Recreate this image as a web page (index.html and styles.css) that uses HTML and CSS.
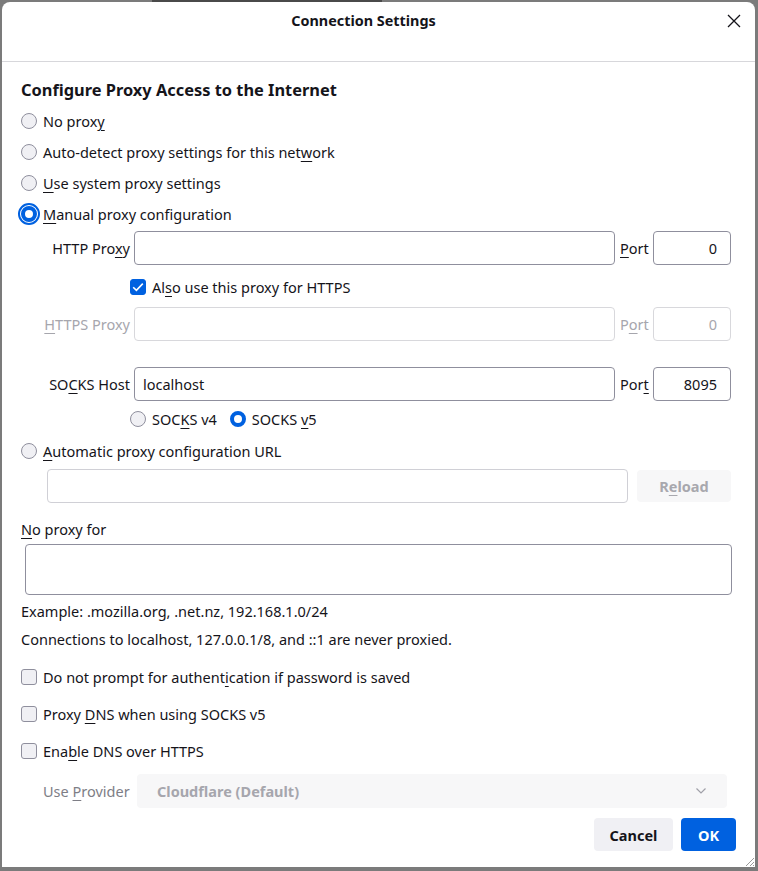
FILE: index.html
```html
<!DOCTYPE html>
<html>
<head>
<meta charset="utf-8">
<link rel="stylesheet" href="styles.css">
</head>
<body>
<div class="backstrip"></div>
<div class="dialog">
  <div class="header">
    <div class="title">Connection Settings</div>
    <svg class="close" width="14" height="14" viewBox="0 0 14 14"><path d="M1 1L13 13M13 1L1 13" stroke="#15141a" stroke-width="1.3" fill="none"/></svg>
  </div>
  <div class="content">
    <div class="heading">Configure Proxy Access to the Internet</div>
    <div class="opt"><span class="radio"></span><span>No prox<u>y</u></span></div>
    <div class="opt"><span class="radio"></span><span>Auto-detect proxy settings for this net<u>w</u>ork</span></div>
    <div class="opt"><span class="radio"></span><span><u>U</u>se system proxy settings</span></div>
    <div class="opt"><span class="radio on focus"></span><span class="tight"><u>M</u>anual proxy configuration</span></div>

    <div class="prow first">
      <span class="plabel">HTTP Pro<u>x</u>y</span>
      <span class="field host"></span>
      <span class="portl"><u>P</u>ort</span>
      <span class="field port">0</span>
    </div>
    <div class="chkrow"><span class="check on"><svg width="12" height="10" viewBox="0 0 12 10"><path d="M1.2 5.2L4.4 8.3L10.8 1.6" stroke="#fff" stroke-width="1.6" fill="none"/></svg></span><span>Al<u>s</u>o use this proxy for HTTPS</span></div>
    <div class="prow dis https">
      <span class="plabel"><u>H</u>TTPS Proxy</span>
      <span class="field host"></span>
      <span class="portl">P<u>o</u>rt</span>
      <span class="field port">0</span>
    </div>
    <div class="prow socks">
      <span class="plabel">SO<u>C</u>KS Host</span>
      <span class="field host">localhost</span>
      <span class="portl">Por<u>t</u></span>
      <span class="field port">8095</span>
    </div>
    <div class="verrow">
      <span class="vopt"><span class="radio"></span><span>SOC<u>K</u>S v4</span></span>
      <span class="vopt"><span class="radio on"></span><span>SOCKS <u>v</u>5</span></span>
    </div>
    <div class="opt auto"><span class="radio"></span><span><u>A</u>utomatic proxy configuration URL</span></div>
    <div class="urlrow">
      <span class="field url"></span>
      <span class="reload">R<u>e</u>load</span>
    </div>
    <div class="text noproxy"><u>N</u>o proxy for</div>
    <div class="area"></div>
    <div class="text example">Example: .mozilla.org, .net.nz, 192.168.1.0/24</div>
    <div class="text never">Connections to localhost, 127.0.0.1/8, and ::1 are never proxied.</div>
    <div class="checks">
      <div class="copt"><span class="check"></span><span>Do not prompt for authent<u>i</u>cation if password is saved</span></div>
      <div class="copt"><span class="check"></span><span>Proxy <u>D</u>NS when using SOCKS v5</span></div>
      <div class="copt"><span class="check"></span><span>Ena<u>b</u>le DNS over HTTPS</span></div>
    </div>
    <div class="provrow">
      <span class="provl">Use <u>P</u>rovider</span>
      <span class="select"><span>Cloudflare (Default)</span><svg width="12" height="8" viewBox="0 0 12 8"><path d="M1.5 1.5L6 6L10.5 1.5" stroke="#a0a0a8" stroke-width="1.2" fill="none"/></svg></span>
    </div>
    <div class="buttons">
      <span class="btn cancel">Cancel</span>
      <span class="btn ok">OK</span>
    </div>
  </div>
  <svg class="grip" width="12" height="12" viewBox="0 0 12 12"><path d="M11 3L3 11M11 7L7 11M11 10L10 11" stroke="#9a9a9a" stroke-width="1" fill="none"/></svg>
</div>
</body>
</html>
```

FILE: styles.css
```css
html, body {
  margin: 0;
  padding: 0;
  height: 100%;
}
body {
  background: #7b7b7b;
  font-family: "Noto Sans", "DejaVu Sans", sans-serif;
  font-size: 14.5px;
  color: #15141a;
  overflow: hidden;
  position: relative;
}
.backstrip {
  position: absolute;
  left: 152px;
  top: 0;
  width: 230px;
  height: 2px;
  background: #4a4a4a;
}
.dialog {
  position: absolute;
  left: 2px;
  top: 2px;
  right: 3px;
  bottom: 4px;
  background: #fff;
  border-radius: 8px 8px 0 0;
  overflow: hidden;
}
u {
  text-decoration-thickness: 1px;
  text-underline-offset: 3px;
}
.header {
  height: 59px;
  border-bottom: 1px solid #d7d7db;
  position: relative;
  display: flex;
  justify-content: center;
  padding-right: 30px;
}
.title {
  font-weight: bold;
  font-size: 14.4px;
  line-height: 20px;
  margin-top: 9px;
}
.close {
  position: absolute;
  right: 14px;
  top: 12px;
}
.content {
  padding: 0 0 0 19px;
  display: flex;
  flex-direction: column;
}
.heading {
  font-weight: bold;
  font-size: 16.4px;
  line-height: 24px;
  margin-top: 16px;
  height: 24px;
  margin-bottom: 3px;
}
.opt {
  height: 31px;
  display: flex;
  align-items: center;
  gap: 6px;
}
.radio {
  width: 16px;
  height: 16px;
  box-sizing: border-box;
  border-radius: 50%;
  border: 1px solid #8f8f9d;
  background: #f0f0f4;
  flex: none;
}
.radio.on {
  border: 4px solid #0061e0;
  background: #fff;
}
.radio.focus {
  outline: 2px solid #0061e0;
  outline-offset: 1px;
}
.prow {
  display: grid;
  grid-template-columns: 87px 481px 30px 78px;
  column-gap: 4px;
  align-items: center;
  margin-left: 22px;
  height: 34px;
}
.prow.first { margin-top: 2px; }
.prow.https { margin-top: 4px; }
.prow.socks { margin-top: 26px; }
.plabel {
  text-align: right;
  white-space: nowrap;
}
.portl {
  margin-left: 1px;
}
.field {
  height: 34px;
  box-sizing: border-box;
  border: 1px solid #8f8f9d;
  border-radius: 4px;
  background: #fff;
  display: flex;
  align-items: center;
  padding: 0 8px;
}
.field.port {
  justify-content: flex-end;
  padding-right: 13px;
}
.dis {
  color: #a6a6ad;
}
.dis .field {
  border-color: #d8d8dc;
}
.chkrow {
  display: flex;
  align-items: center;
  gap: 6px;
  height: 32px;
  margin-top: 6px;
  margin-left: 109px;
}
.check {
  width: 16px;
  height: 16px;
  box-sizing: border-box;
  border: 1px solid #8f8f9d;
  border-radius: 3px;
  background: #f0f0f4;
  flex: none;
  display: flex;
  align-items: center;
  justify-content: center;
}
.check.on {
  background: #0061e0;
  border-color: #0061e0;
}
.verrow {
  display: flex;
  height: 30px;
  margin-top: 3px;
  margin-left: 109px;
  gap: 13px;
}
.vopt {
  display: flex;
  align-items: center;
  gap: 6px;
}
.opt.auto {
  height: 30px;
  margin-top: 2px;
}
.urlrow {
  display: flex;
  margin-top: 3px;
  margin-left: 26px;
  align-items: center;
}
.field.url {
  width: 581px;
  border-color: #d0d0d6;
}
.reload {
  width: 94px;
  height: 32px;
  margin-left: 9px;
  background: #f7f7f8;
  border-radius: 4px;
  display: flex;
  align-items: center;
  justify-content: center;
  font-weight: bold;
  color: #a8a8ae;
}
.text {
  line-height: 20px;
  height: 20px;
}
.noproxy { margin-top: 16px; }
.area {
  margin-top: 5px;
  margin-left: 4px;
  width: 707px;
  height: 51px;
  box-sizing: border-box;
  border: 1px solid #8f8f9d;
  border-radius: 4px;
}
.example { margin-top: 6px; }
.never { margin-top: 8px; }
.checks {
  margin-top: 9px;
}
.copt {
  height: 37px;
  display: flex;
  align-items: center;
  gap: 6px;
}
.provrow {
  display: flex;
  align-items: center;
  margin-top: 5px;
  margin-left: 22px;
  color: #7e7e86;
}
.provl {
  width: 94px;
  white-space: nowrap;
}
.select {
  width: 590px;
  height: 34px;
  background: #f7f7f8;
  border-radius: 4px;
  display: flex;
  align-items: center;
  justify-content: space-between;
  padding: 0 20px 0 20px;
  box-sizing: border-box;
  font-weight: bold;
  color: #a6a6ad;
}
.buttons {
  display: flex;
  justify-content: flex-end;
  gap: 8px;
  margin-top: 10px;
  padding-right: 19px;
}
.btn {
  height: 33px;
  border-radius: 4px;
  display: flex;
  align-items: center;
  justify-content: center;
  font-weight: bold;
}
.cancel {
  width: 79px;
  background: #f0f0f4;
}
.ok {
  width: 55px;
  background: #0061e0;
  color: #fff;
}
.grip {
  position: absolute;
  right: 0;
  bottom: 0;
}
```
